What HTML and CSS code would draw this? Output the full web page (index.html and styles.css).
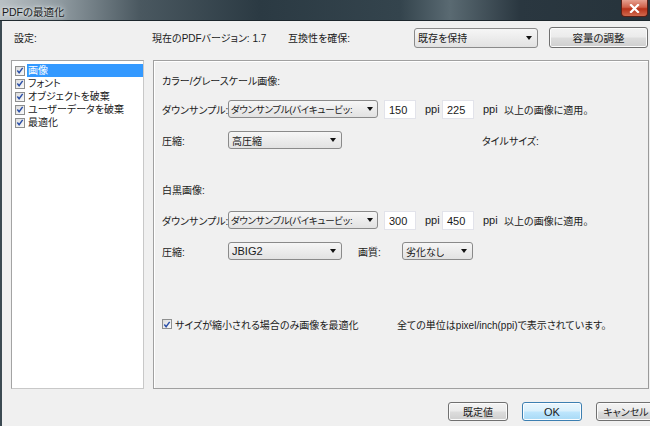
FILE: index.html
```html
<!DOCTYPE html>
<html lang="ja">
<head>
<meta charset="utf-8">
<title>PDFの最適化</title>
<link rel="stylesheet" href="styles.css">
</head>
<body>
<div class="window">
  <div class="titlebar">
    <span class="title">PDFの最適化</span>
    <div class="close"><svg width="11" height="9" viewBox="0 0 11 9"><path d="M2 1 L9 8 M9 1 L2 8" stroke="#fff" stroke-width="2.2" stroke-linecap="square"/></svg></div>
  </div>
  <div class="body">
    <div class="toprow">
      <span class="c1">設定:</span>
      <span class="c2">現在のPDFバージョン: 1.7</span>
      <span class="c3">互換性を確保:</span>
      <div class="select sel-top"><span>既存を保持</span><i class="arrow"></i></div>
      <div class="btn btn-top">容量の調整</div>
    </div>
    <div class="mainrow">
      <ul class="list">
        <li class="sel"><span class="cb"><svg width="9" height="9" viewBox="0 0 9 9"><path d="M1.5 4.5 L3.5 7 L7.5 1.5" fill="none" stroke="#2a4fa8" stroke-width="1.6"/></svg></span><span class="lt">画像</span></li>
        <li><span class="cb"><svg width="9" height="9" viewBox="0 0 9 9"><path d="M1.5 4.5 L3.5 7 L7.5 1.5" fill="none" stroke="#2a4fa8" stroke-width="1.6"/></svg></span><span class="lt">フォント</span></li>
        <li><span class="cb"><svg width="9" height="9" viewBox="0 0 9 9"><path d="M1.5 4.5 L3.5 7 L7.5 1.5" fill="none" stroke="#2a4fa8" stroke-width="1.6"/></svg></span><span class="lt">オブジェクトを破棄</span></li>
        <li><span class="cb"><svg width="9" height="9" viewBox="0 0 9 9"><path d="M1.5 4.5 L3.5 7 L7.5 1.5" fill="none" stroke="#2a4fa8" stroke-width="1.6"/></svg></span><span class="lt">ユーザーデータを破棄</span></li>
        <li><span class="cb"><svg width="9" height="9" viewBox="0 0 9 9"><path d="M1.5 4.5 L3.5 7 L7.5 1.5" fill="none" stroke="#2a4fa8" stroke-width="1.6"/></svg></span><span class="lt">最適化</span></li>
      </ul>
      <div class="panel">
        <div class="heading h1">カラー/グレースケール画像:</div>
        <div class="row ds r1">
          <span class="lbl">ダウンサンプル:</span>
          <div class="select sel-ds"><span>ダウンサンプル(バイキュービッ:</span><i class="arrow"></i></div>
          <div class="input">150</div>
          <span class="ppi">ppi</span>
          <div class="input in2">225</div>
          <span class="ppi">ppi</span>
          <span class="apply">以上の画像に適用。</span>
        </div>
        <div class="row cp r2">
          <span class="lbl">圧縮:</span>
          <div class="select sel-cp"><span>高圧縮</span><i class="arrow"></i></div>
          <span class="tile">タイルサイズ:</span>
        </div>
        <div class="heading h2">白黒画像:</div>
        <div class="row ds r3">
          <span class="lbl">ダウンサンプル:</span>
          <div class="select sel-ds"><span>ダウンサンプル(バイキュービッ:</span><i class="arrow"></i></div>
          <div class="input">300</div>
          <span class="ppi">ppi</span>
          <div class="input in2">450</div>
          <span class="ppi">ppi</span>
          <span class="apply">以上の画像に適用。</span>
        </div>
        <div class="row cp r4">
          <span class="lbl">圧縮:</span>
          <div class="select sel-cp"><span class="latin">JBIG2</span><i class="arrow"></i></div>
          <span class="q">画質:</span>
          <div class="select sel-q"><span>劣化なし</span><i class="arrow"></i></div>
        </div>
        <div class="row chk">
          <span class="cb"><svg width="9" height="9" viewBox="0 0 9 9"><path d="M1.5 4.5 L3.5 7 L7.5 1.5" fill="none" stroke="#2a4fa8" stroke-width="1.6"/></svg></span>
          <span class="chklbl">サイズが縮小される場合のみ画像を最適化</span>
          <span class="units">全ての単位はpixel/inch(ppi)で表示されています。</span>
        </div>
      </div>
    </div>
    <div class="footer">
      <div class="btn fbtn">既定値</div>
      <div class="btn fbtn ok"><span class="latin">OK</span></div>
      <div class="btn fbtn">キャンセル</div>
    </div>
  </div>
</div>
</body>
</html>
```
FILE: styles.css
```css
* { box-sizing: border-box; }
html, body { margin: 0; padding: 0; }
body {
  width: 650px;
  height: 426px;
  overflow: hidden;
  font-family: "Liberation Sans", "Noto Sans CJK JP", sans-serif;
  font-size: 10px;
  font-feature-settings: "palt";
  color: #1a1a1a;
  white-space: nowrap;
}
.latin { font-size: 11px; }
.window {
  width: 650px;
  height: 426px;
  display: flex;
  flex-direction: column;
  background: #3c4a52;
}
.titlebar {
  height: 21px;
  flex: none;
  display: flex;
  align-items: flex-start;
  justify-content: space-between;
  background: linear-gradient(90deg, #b9c0c4 0px, #8f9aa0 60px, #4a5860 140px, #2b3a43 260px, #34444d 400px, #5a6a72 450px, #2a3740 520px, #26333b 650px);
  border-bottom: 1px solid #1c262c;
}
.title {
  padding: 4px 0 0 2px;
  color: #1b1b1b;
  font-size: 10.5px;
  text-shadow: 0 0 6px #e8eef0, 0 0 3px #e8eef0;
}
.close {
  width: 27px;
  height: 17px;
  margin-right: 2px;
  border: 1px solid #5a1f16;
  border-top: none;
  border-radius: 0 0 4px 4px;
  background: linear-gradient(#e6a090 0%, #d0614a 45%, #b8321a 55%, #cf6a4e 100%);
  display: flex;
  align-items: center;
  justify-content: center;
}
.body {
  flex: 1;
  margin-left: 2px;
  background: #f0f0f0;
  display: flex;
  flex-direction: column;
}
.toprow {
  margin-top: 6px;
  height: 21px;
  display: flex;
  align-items: center;
}
.c1 { width: 150px; padding-left: 12px; }
.c2 { width: 136px; }
.c3 { width: 126px; }
.select {
  height: 18px;
  border: 1px solid #8a8a8a;
  border-radius: 3px;
  background: linear-gradient(#f6f6f6, #e2e2e2);
  display: flex;
  align-items: center;
  justify-content: space-between;
  padding: 0 5px 0 3px;
  overflow: hidden;
}
.select > span { overflow: hidden; }
.arrow {
  flex: none;
  width: 0;
  height: 0;
  border-left: 3px solid transparent;
  border-right: 3px solid transparent;
  border-top: 4px solid #111;
  margin-left: 4px;
}
.sel-top { width: 124px; height: 20px; }
.btn {
  height: 21px;
  border: 1px solid #707070;
  border-radius: 3px;
  background: linear-gradient(#f3f3f3 0%, #ebebeb 48%, #dddddd 52%, #cfcfcf 100%);
  display: flex;
  align-items: center;
  justify-content: center;
  box-shadow: inset 0 0 0 1px #fbfbfb;
}
.btn-top { width: 99px; margin-left: 11px; font-size: 10.5px; }
.mainrow {
  margin-top: 12px;
  height: 329px;
  display: flex;
}
.list {
  margin: 0 0 0 9px;
  padding: 3px 0 0 3px;
  width: 133px;
  height: 329px;
  list-style: none;
  background: #fff;
  border: 1px solid #a3a3a3;
  border-right-color: #c8c8c8;
  border-bottom-color: #c8c8c8;
}
.list li {
  height: 13px;
  display: flex;
  align-items: center;
}
.cb {
  flex: none;
  width: 10px;
  height: 10px;
  border: 1px solid #8e8f8f;
  background: linear-gradient(135deg, #dcdcdc, #fafafa);
  display: flex;
  align-items: center;
  justify-content: center;
  margin-right: 2px;
}
.cb svg { display: block; }
.lt { flex: 1; height: 13px; line-height: 13px; padding-left: 1px; }
.list li.sel .lt { background: #3399ff; color: #fff; }
.panel {
  margin-left: 9px;
  width: 496px;
  height: 329px;
  border: 1px solid #a0a0a0;
  border-right-color: #9a9a9a;
  box-shadow: inset 1px 1px 0 #fff;
  padding-left: 8px;
  display: flex;
  flex-direction: column;
}
.heading { height: 14px; line-height: 14px; }
.h1 { margin-top: 14px; }
.h2 { margin-top: 35px; }
.row { display: flex; align-items: center; }
.lbl { width: 66px; flex: none; }
.ds { height: 20px; margin-top: 10px; }
.r3 { margin-top: 12px; }
.cp { height: 18px; margin-top: 12px; }
.sel-ds { width: 150px; padding-left: 2px; padding-right: 4px; }
.sel-ds > span { font-size: 9.5px; letter-spacing: -0.3px; overflow: visible; }
.sel-cp { width: 114px; }
.input {
  width: 32px;
  height: 19px;
  margin-left: 6px;
  background: #fff;
  border: 1px solid #e2e3ea;
  padding: 2px 0 0 4px;
  line-height: 14px;
  font-size: 11px;
}
.in2 { margin-left: 5px; }
.ppi { margin-left: 9px; width: 12px; font-size: 11px; }
.apply { margin-left: 9px; }
.tile { margin-left: 140px; }
.q { margin-left: 16px; width: 44px; }
.sel-q { width: 71px; }
.chk { margin-top: 57px; height: 14px; }
.chk .cb { margin-right: 3px; }
.chklbl { width: 222px; flex: none; }
.units { margin-left: 0; }
.footer {
  margin-top: 13px;
  height: 19px;
  display: flex;
  justify-content: flex-end;
  margin-right: -6px;
}
.fbtn { width: 60px; height: 19px; margin-left: 14px; }
.fbtn.ok {
  border-color: #3c7fb1;
  background: linear-gradient(#eaf6fd 0%, #d9f0fc 48%, #bee6fd 52%, #a7d9f5 100%);
  box-shadow: inset 0 0 0 1px #fbfdff;
}
```
